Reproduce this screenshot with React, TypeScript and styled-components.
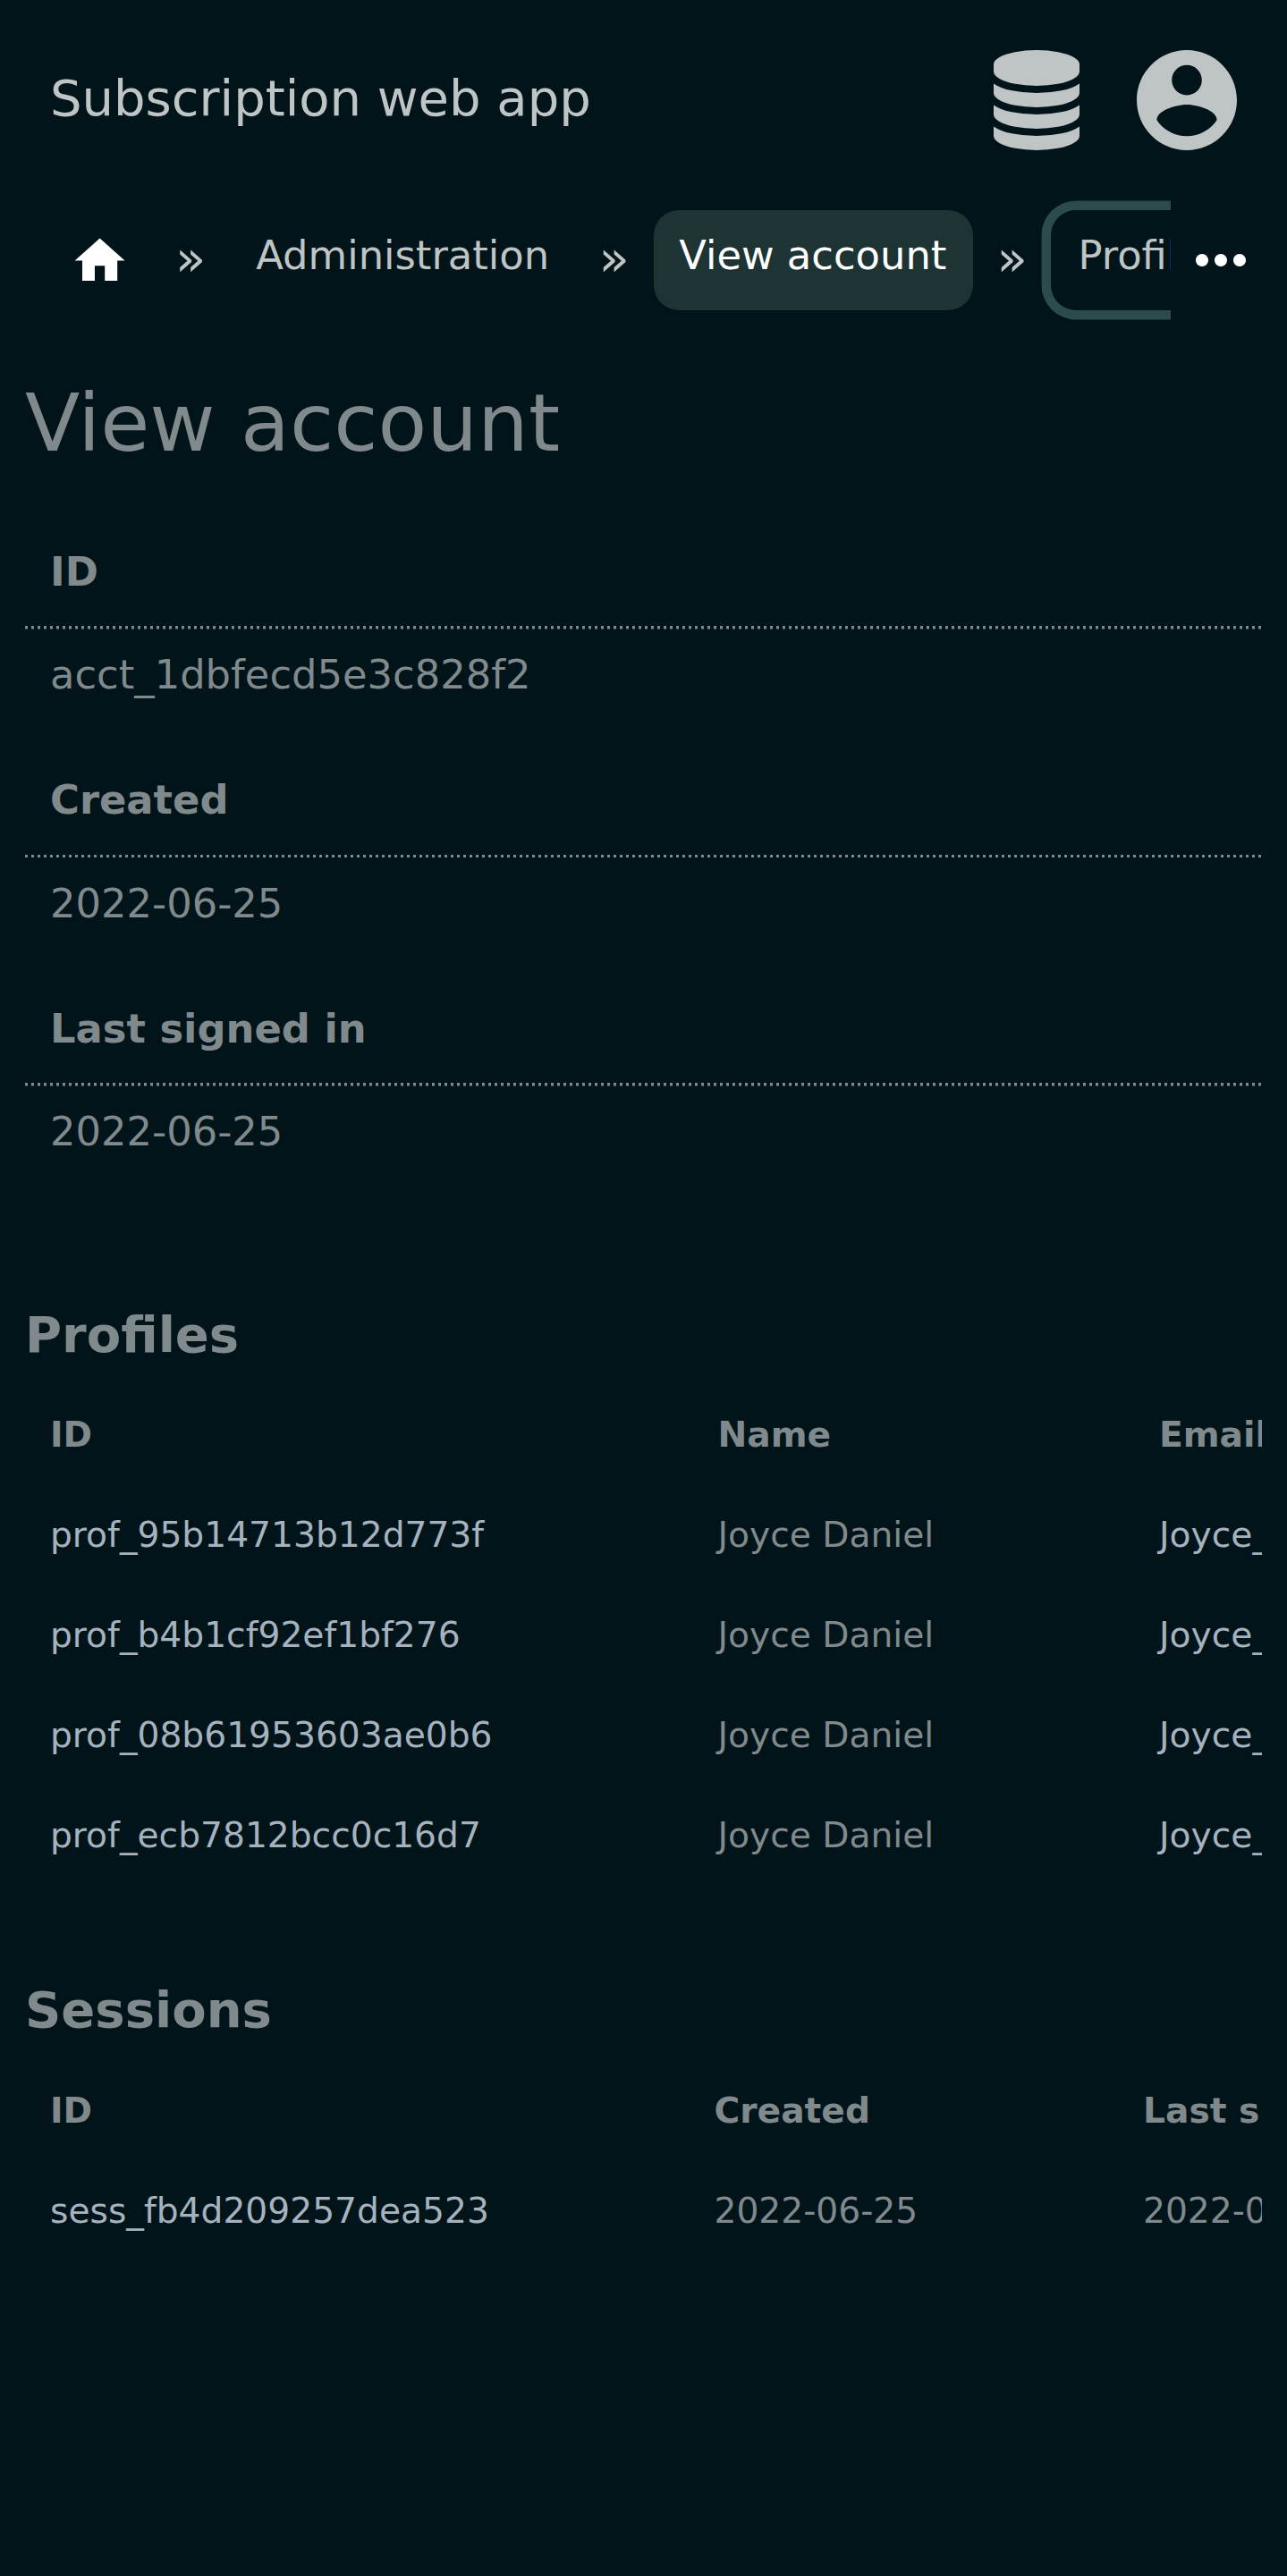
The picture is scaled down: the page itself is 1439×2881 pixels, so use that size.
import React from "react";
import styled, { createGlobalStyle } from "styled-components";

const colors = {
  background: "#001419",
  text: "#80898c",
  bright: "#bfc4c5",
  link: "#a6b2be",
  active: "#1e3434",
  focus: "#2c4b4b",
};

const GlobalStyle = createGlobalStyle`
  *, *::before, *::after { box-sizing: border-box; }
  html, body { margin: 0; background: ${colors.background}; }
  body {
    color: ${colors.text};
    font-family: "DejaVu Sans", sans-serif;
    font-size: 44.8px;
  }
`;

const Page = styled.div`
  display: flex;
  flex-direction: column;
  width: 100%;
  min-height: 2881px;
  overflow: hidden;
`;

const Header = styled.header`
  display: flex;
  align-items: center;
  justify-content: space-between;
  height: 224px;
  padding: 0 56px;
  color: ${colors.bright};
`;

const AppName = styled.div`
  font-size: 56px;
  line-height: 65px;
  padding-bottom: 5px;
  white-space: nowrap;
`;

const HeaderActions = styled.div`
  display: flex;
  gap: 56px;
`;

const Icon = styled.svg<{ $size: number }>`
  display: block;
  flex: none;
  width: ${(p) => p.$size}px;
  height: ${(p) => p.$size}px;
  fill: currentColor;
`;

const NavBar = styled.nav`
  display: flex;
  height: 134px;
  padding-left: 28px;
`;

const Crumbs = styled.div`
  display: flex;
  flex: 1;
  align-items: flex-start;
  min-width: 0;
  overflow: hidden;
  padding-left: 17.5px;
  color: ${colors.bright};
`;

const Crumb = styled.a<{ $state?: "active" | "focused" }>`
  flex: none;
  height: 112px;
  margin: 10.5px;
  padding: 25.5px 28px 0 ${(p) => (p.$state === "focused" ? 30.5 : 28)}px;
  border-radius: 28px;
  min-width: ${(p) => (p.$state === "active" ? "357px" : "auto")};
  background: ${(p) => (p.$state === "active" ? colors.active : "transparent")};
  box-shadow: ${(p) => (p.$state === "focused" ? `0 0 0 10.5px ${colors.focus}` : "none")};
  color: ${(p) => (p.$state === "active" ? "#ffffff" : "inherit")};
  line-height: 52px;
  white-space: nowrap;
`;

const HomeCrumb = styled.a`
  display: flex;
  flex: none;
  align-items: center;
  justify-content: center;
  width: 133px;
  height: 133px;
  padding-top: 3px;
  color: #ffffff;
`;

const Separator = styled.span<{ $gap?: number }>`
  flex: none;
  padding: 32px ${(p) => p.$gap ?? 17}px 0;
  font-size: 56px;
  line-height: 65px;
`;

const MoreButton = styled.div`
  display: flex;
  flex: none;
  align-items: center;
  justify-content: center;
  width: 130px;
  height: 133px;
  padding-right: 18px;
  color: #ffffff;
`;

const Main = styled.main`
  display: flex;
  flex-direction: column;
  padding: 0 28px;
`;

const PageTitle = styled.h1`
  margin: 63px 0 0;
  font-size: 89.6px;
  font-weight: 400;
  line-height: 104px;
`;

const Details = styled.dl`
  margin: 63px 0 0;
`;

const Term = styled.dt`
  height: 115.5px;
  padding: 25.5px 28px 0;
  background: repeating-linear-gradient(
      90deg,
      ${colors.text} 0 3.5px,
      transparent 3.5px 7px
    )
    left bottom / 100% 3.5px no-repeat;
  font-weight: 700;
  line-height: 52px;
`;

const Definition = styled.dd`
  height: 140px;
  margin: 0;
  padding: 25.5px 28px 0;
  line-height: 52px;
`;

const Section = styled.section<{ $top: number }>`
  display: flex;
  flex-direction: column;
  margin-top: ${(p) => p.$top}px;
  overflow: hidden;
`;

const SectionTitle = styled.h2<{ $gap: number }>`
  margin: 0;
  font-size: 56px;
  line-height: 65px;
  padding-bottom: ${(p) => p.$gap}px;
`;

const Row = styled.div<{ $columns: string; $head?: boolean }>`
  display: grid;
  grid-template-columns: ${(p) => p.$columns};
  height: 112px;
  padding-left: 28px;
  font-size: 39.2px;
  font-weight: ${(p) => (p.$head ? 700 : 400)};
  line-height: 112px;
  white-space: nowrap;
`;

const Cell = styled.span<{ $link?: boolean }>`
  color: ${(p) => (p.$link ? colors.link : "inherit")};
`;

const DatabaseIcon = () => (
  <Icon $size={112} viewBox="0 0 1536 1792">
    <path d="M768 768q237 0 443-43t325-127v170q0 69-103 128t-280 93.5-385 34.5-385-34.5-280-93.5-103-128v-170q119 84 325 127t443 43zm0 768q237 0 443-43t325-127v170q0 69-103 128t-280 93.5-385 34.5-385-34.5-280-93.5-103-128v-170q119 84 325 127t443 43zm0-384q237 0 443-43t325-127v170q0 69-103 128t-280 93.5-385 34.5-385-34.5-280-93.5-103-128v-170q119 84 325 127t443 43zm0-1152q208 0 385 34.5t280 93.5 103 128v128q0 69-103 128t-280 93.5-385 34.5-385-34.5-280-93.5-103-128v-128q0-69 103-128t280-93.5 385-34.5z" />
  </Icon>
);

const AccountIcon = () => (
  <Icon $size={112} viewBox="2 2 20 20">
    <path d="M12 2C6.48 2 2 6.48 2 12s4.48 10 10 10 10-4.48 10-10S17.52 2 12 2zm0 3c1.66 0 3 1.34 3 3s-1.34 3-3 3-3-1.34-3-3 1.34-3 3-3zm0 14.2c-2.5 0-4.71-1.28-6-3.22.03-1.99 4-3.08 6-3.08 1.99 0 5.97 1.09 6 3.08-1.29 1.94-3.5 3.22-6 3.22z" />
  </Icon>
);

const HomeIcon = () => (
  <Icon $size={67.2} viewBox="0 0 24 24">
    <path d="M10 20v-6h4v6h5v-8h3L12 3 2 12h3v8z" />
  </Icon>
);

const MoreIcon = () => (
  <Icon $size={84} viewBox="0 0 24 24">
    <path d="M6 10c-1.1 0-2 .9-2 2s.9 2 2 2 2-.9 2-2-.9-2-2-2zm12 0c-1.1 0-2 .9-2 2s.9 2 2 2 2-.9 2-2-.9-2-2-2zm-6 0c-1.1 0-2 .9-2 2s.9 2 2 2 2-.9 2-2-.9-2-2-2z" />
  </Icon>
);

const details = [
  ["ID", "acct_1dbfecd5e3c828f2"],
  ["Created", "2022-06-25"],
  ["Last signed in", "2022-06-25"],
];

const profiles = [
  "prof_95b14713b12d773f",
  "prof_b4b1cf92ef1bf276",
  "prof_08b61953603ae0b6",
  "prof_ecb7812bcc0c16d7",
];

const profileColumns = "746.5px 493.5px 400px";
const sessionColumns = "742.5px 479.5px 400px";

export default function App() {
  return (
    <>
      <GlobalStyle />
      <Page>
        <Header>
          <AppName>Subscription web app</AppName>
          <HeaderActions>
            <DatabaseIcon />
            <AccountIcon />
          </HeaderActions>
        </Header>
        <NavBar>
          <Crumbs>
            <HomeCrumb>
              <HomeIcon />
            </HomeCrumb>
            <Separator $gap={17.5}>»</Separator>
            <Crumb>Administration</Crumb>
            <Separator>»</Separator>
            <Crumb $state="active">View account</Crumb>
            <Separator $gap={15.7}>»</Separator>
            <Crumb $state="focused">Profile</Crumb>
          </Crumbs>
          <MoreButton>
            <MoreIcon />
          </MoreButton>
        </NavBar>
        <Main>
          <PageTitle>View account</PageTitle>
          <Details>
            {details.map(([term, value]) => (
              <React.Fragment key={term}>
                <Term>{term}</Term>
                <Definition>{value}</Definition>
              </React.Fragment>
            ))}
          </Details>
          <Section $top={105.5}>
            <SectionTitle $gap={24}>Profiles</SectionTitle>
            <Row $columns={profileColumns} $head>
              <Cell>ID</Cell>
              <Cell>Name</Cell>
              <Cell>Email</Cell>
            </Row>
            {profiles.map((id) => (
              <Row key={id} $columns={profileColumns}>
                <Cell $link>{id}</Cell>
                <Cell>Joyce Daniel</Cell>
                <Cell $link>Joyce_Daniel</Cell>
              </Row>
            ))}
          </Section>
          <Section $top={106}>
            <SectionTitle $gap={25}>Sessions</SectionTitle>
            <Row $columns={sessionColumns} $head>
              <Cell>ID</Cell>
              <Cell>Created</Cell>
              <Cell>Last signed in</Cell>
            </Row>
            <Row $columns={sessionColumns}>
              <Cell $link>sess_fb4d209257dea523</Cell>
              <Cell>2022-06-25</Cell>
              <Cell>2022-06-25</Cell>
            </Row>
          </Section>
        </Main>
      </Page>
    </>
  );
}
